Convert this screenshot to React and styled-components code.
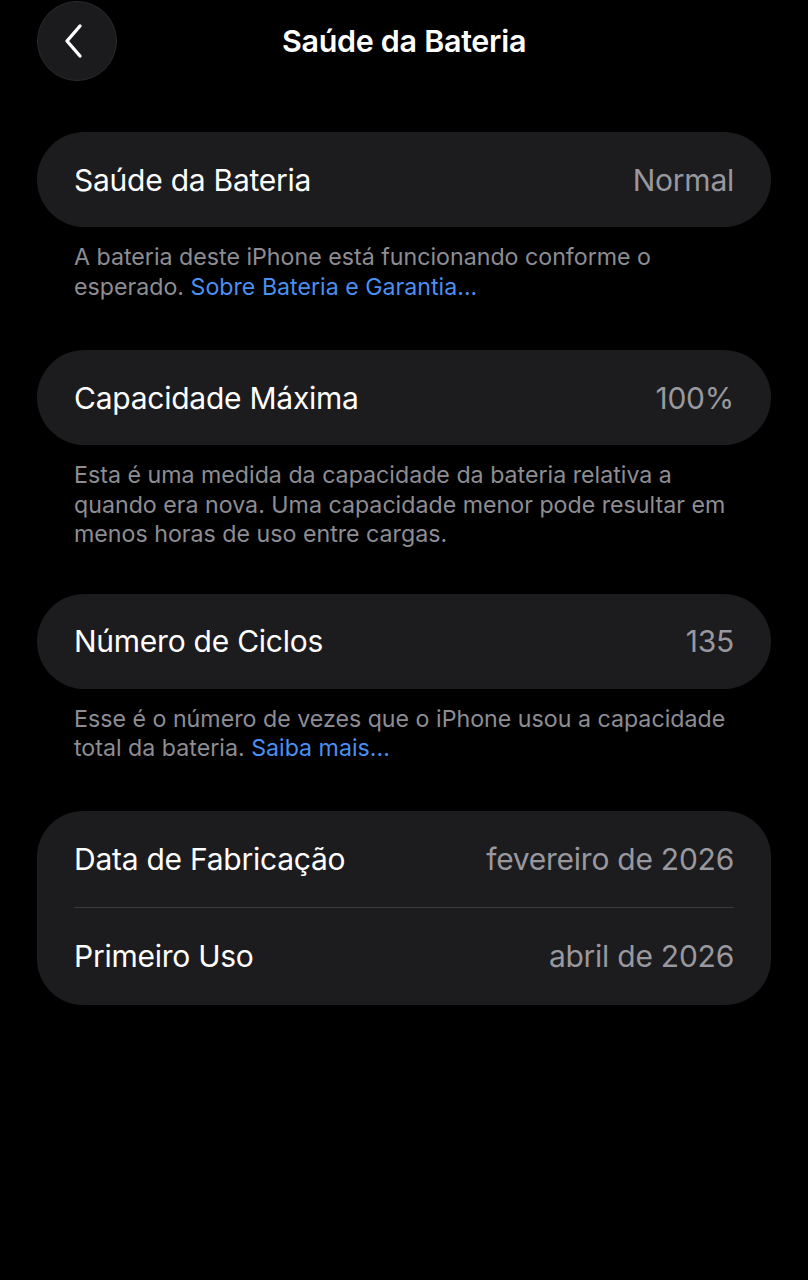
import React from 'react';
import styled, { createGlobalStyle } from 'styled-components';

const GlobalStyle = createGlobalStyle`
  html, body {
    margin: 0;
    padding: 0;
    background: #000;
  }
  body {
    font-family: Inter, "Noto Sans", "Liberation Sans", sans-serif;
    -webkit-font-smoothing: antialiased;
  }
`;

const Page = styled.div`
  width: 808px;
  min-height: 1280px;
  background: #000;
  box-sizing: border-box;
  padding: 1px 37px 0;
  color: #fff;
`;

const Header = styled.header`
  display: grid;
  grid-template-columns: 80px 1fr 80px;
  align-items: center;
  height: 80px;
  margin-bottom: 51px;
`;

const BackButton = styled.button`
  width: 80px;
  height: 80px;
  border-radius: 50%;
  border: 1px solid #2a2a2c;
  background: #1b1b1d;
  display: flex;
  align-items: center;
  justify-content: center;
  padding: 0;
  padding-right: 6px;
  cursor: pointer;
`;

const Title = styled.h1`
  margin: 0 0 2px;
  text-align: center;
  font-size: 30.5px;
  font-weight: 600;
  letter-spacing: -0.3px;
  color: #fff;
`;

const Card = styled.div`
  background: #1c1c1e;
  border-radius: ${p => (p.$tall ? '46px' : '48px')};
  padding: 0 37px;
`;

const Row = styled.div`
  display: flex;
  align-items: center;
  justify-content: space-between;
  height: ${p => p.$h || 95}px;
  border-top: ${p => (p.$divider ? '1px solid #3a3a3c' : 'none')};
`;

const Label = styled.span`
  font-size: 30px;
  font-weight: 400;
  letter-spacing: -0.25px;
  color: #fff;
`;

const Value = styled.span`
  font-size: 30px;
  font-weight: 400;
  letter-spacing: -0.25px;
  color: #98989e;
`;

const Footnote = styled.p`
  margin: 0;
  padding: 16px 37px ${p => p.$bottom || 48}px;
  font-size: 23.2px;
  line-height: 29.5px;
  color: #8d8d93;
  letter-spacing: 0;
`;

const Link = styled.a`
  color: #4a8ff2;
  text-decoration: none;
`;

function Chevron() {
  return (
    <svg width="24" height="36" viewBox="0 0 24 36" fill="none">
      <path d="M18 3 L5 18 L18 33" stroke="#fff" strokeWidth="3.4" strokeLinecap="round" strokeLinejoin="round" />
    </svg>
  );
}

export default function App() {
  return (
    <Page>
      <GlobalStyle />
      <Header>
        <BackButton aria-label="Voltar">
          <Chevron />
        </BackButton>
        <Title>Saúde da Bateria</Title>
        <span />
      </Header>

      <Card>
        <Row>
          <Label>Saúde da Bateria</Label>
          <Value>Normal</Value>
        </Row>
      </Card>
      <Footnote $bottom={48}>
        A bateria deste iPhone está funcionando conforme o esperado.{' '}
        <Link>Sobre Bateria e Garantia...</Link>
      </Footnote>

      <Card>
        <Row>
          <Label>Capacidade Máxima</Label>
          <Value>100%</Value>
        </Row>
      </Card>
      <Footnote $bottom={44}>
        Esta é uma medida da capacidade da bateria relativa a quando era nova. Uma capacidade menor pode resultar em menos horas de uso entre cargas.
      </Footnote>

      <Card>
        <Row>
          <Label>Número de Ciclos</Label>
          <Value>135</Value>
        </Row>
      </Card>
      <Footnote $bottom={47}>
        Esse é o número de vezes que o iPhone usou a capacidade total da bateria.{' '}
        <Link>Saiba mais...</Link>
      </Footnote>

      <Card $tall>
        <Row $h={96}>
          <Label>Data de Fabricação</Label>
          <Value>fevereiro de 2026</Value>
        </Row>
        <Row $h={97} $divider>
          <Label>Primeiro Uso</Label>
          <Value>abril de 2026</Value>
        </Row>
      </Card>
    </Page>
  );
}
